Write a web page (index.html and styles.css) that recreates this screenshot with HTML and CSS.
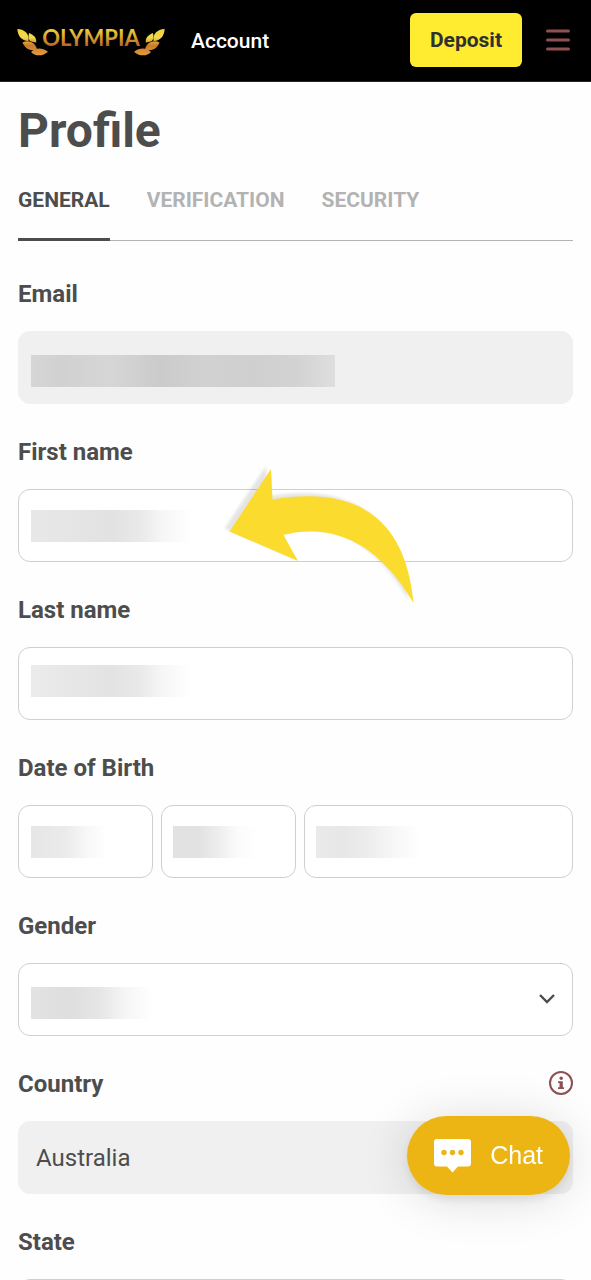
FILE: index.html
```html
<!DOCTYPE html>
<html lang="en">
<head>
<meta charset="utf-8">
<meta name="viewport" content="width=device-width, initial-scale=1">
<title>Olympia – Profile</title>
<link rel="stylesheet" href="styles.css">
</head>
<body>
<div class="app">
  <header class="topbar">
    <a class="logo" href="#" aria-label="Olympia home">
      <svg class="logo-mark" width="148" height="32" viewBox="0 0 148 32">
        <defs>
          <linearGradient id="gold" gradientUnits="userSpaceOnUse" x1="0" y1="4" x2="0" y2="31">
            <stop offset="0" stop-color="#f2d33c"/>
            <stop offset=".35" stop-color="#f3d94b"/>
            <stop offset=".65" stop-color="#cb7a2c"/>
            <stop offset="1" stop-color="#e59a3c"/>
          </linearGradient>
          <linearGradient id="gold-text" gradientUnits="userSpaceOnUse" x1="0" y1="6" x2="0" y2="22">
            <stop offset="0" stop-color="#ecc93a"/>
            <stop offset=".4" stop-color="#d9a832"/>
            <stop offset="1" stop-color="#b96424"/>
          </linearGradient>
          <g id="wing">
            <path d="M0.300 5C8 5.500 12.500 10 11.500 17C4 16.500 1 12 0.300 5Z"/>
            <path d="M12 9C17 11 19.800 14 19.200 18.500C17 18.500 15 18 12.800 16.800C11.300 14.500 11.300 11.500 12 9Z"/>
            <path d="M5.500 18.500C11 15.500 18.500 18 20 25.500C14 27.500 8 25 5.500 18.500Z"/>
            <path d="M14 28C19 23.500 25 23.500 31 27.700C26 32.500 18 32.500 14 28Z"/>
          </g>
        </defs>
        <use href="#wing" fill="url(#gold)"/>
        <use href="#wing" fill="url(#gold)" transform="translate(148 0) scale(-1 1)"/>
        <text class="logo-text" x="74" y="22" text-anchor="middle" fill="url(#gold-text)">OLYMPIA</text>
      </svg>
    </a>
    <span class="section-name">Account</span>
    <button class="deposit" type="button">Deposit</button>
    <button class="menu" type="button" aria-label="Menu">
      <svg width="24" height="22" viewBox="0 0 24 22" stroke="#8f5150" stroke-width="3" stroke-linecap="round"><path d="M1.500 2H22.500M1.500 11H22.500M1.500 20H22.500"/></svg>
    </button>
  </header>

  <main class="content">
    <h1 class="title">Profile</h1>
    <nav class="tabs" aria-label="Profile sections">
      <a class="tab tab-active" href="#" aria-current="page">GENERAL</a>
      <a class="tab" href="#">VERIFICATION</a>
      <a class="tab" href="#">SECURITY</a>
    </nav>

    <form class="form">
      <div class="field">
        <label class="label" for="email">Email</label>
        <input class="control control-filled masked masked-email" id="email" type="email" readonly>
      </div>
      <div class="field field-first">
        <label class="label" for="first">First name</label>
        <input class="control masked masked-first" id="first" type="text">
        <svg class="arrow" width="200" height="150" viewBox="0 0 200 150" aria-hidden="true">
          <defs><filter id="soft" x="-20%" y="-20%" width="140%" height="140%"><feGaussianBlur stdDeviation="1.500"/></filter>
          <path id="swoosh" d="M9.500 71.500L51 9L52.500 39.500C128 27 185 50 193.500 143C158 82 112 63 63.500 75L78 101Z"/></defs>
          <use href="#swoosh" fill="#000" opacity=".1" filter="url(#soft)" transform="translate(-5 -3)"/>
          <use href="#swoosh" fill="#fbdc2e"/>
        </svg>
      </div>
      <div class="field">
        <label class="label" for="last">Last name</label>
        <input class="control masked masked-last" id="last" type="text">
      </div>
      <div class="field" role="group" aria-labelledby="dob">
        <span class="label" id="dob">Date of Birth</span>
        <div class="dob">
          <input class="control masked masked-day" type="text" aria-label="Day">
          <input class="control masked masked-month" type="text" aria-label="Month">
          <input class="control masked masked-year" type="text" aria-label="Year">
        </div>
      </div>
      <div class="field">
        <label class="label" for="gender">Gender</label>
        <div class="select">
          <select class="control masked masked-gender" id="gender"><option value=""></option></select>
          <svg class="chevron" width="16" height="10" viewBox="0 0 16 10" fill="none" stroke="#4d4d4d" stroke-width="2.400" aria-hidden="true"><path d="M1 1L8 8L15 1"/></svg>
        </div>
      </div>
      <div class="field">
        <div class="label-row">
          <label class="label" for="country">Country</label>
          <button class="info" type="button" aria-label="Country information">
            <svg width="24" height="24" viewBox="0 0 24 24"><circle cx="12" cy="12" r="11" fill="none" stroke="#8c5152" stroke-width="2"/><circle cx="12.200" cy="7.200" r="1.700" fill="#8c5152"/><path d="M9 10.200H13.800V16.200H15V18H9V16.200H10.500V12H9Z" fill="#8c5152"/></svg>
          </button>
        </div>
        <input class="control control-filled" id="country" type="text" value="Australia" readonly>
      </div>
      <div class="field">
        <label class="label" for="state">State</label>
        <input class="control" id="state" type="text">
      </div>
    </form>
  </main>

  <button class="chat" type="button">
    <svg width="37" height="34" viewBox="0 0 37 34" aria-hidden="true"><path d="M3 0H34Q37 0 37 3V24Q37 27.500 34 27.500H24L18.500 33.500L13 27.500H3Q0 27.500 0 24V3Q0 0 3 0Z" fill="#fff"/><g fill="#edb513"><circle cx="10" cy="13.500" r="2.700"/><circle cx="18.500" cy="13.500" r="2.700"/><circle cx="27" cy="13.500" r="2.700"/></g></svg>
    <span>Chat</span>
  </button>
</div>
</body>
</html>
```
FILE: styles.css
```css
* {
  box-sizing: border-box;
}

body {
  margin: 0;
  background: #fefefe;
  color: #4d4d4d;
  font-family: Roboto, sans-serif;
}

button {
  padding: 0;
  border: 0;
  background: none;
  font-family: inherit;
  cursor: pointer;
}

svg {
  display: block;
}

.app {
  display: flex;
  flex-direction: column;
  height: 100vh;
}

.topbar {
  display: flex;
  flex-shrink: 0;
  align-items: center;
  padding: 13px 21px 14px 17px;
  border-bottom: 1px solid #262324;
  background: #000;
}

.logo-text {
  font: 700 22px Lato, sans-serif;
}

.section-name {
  margin-left: 26px;
  padding-top: 2px;
  color: #fff;
  font-size: 21px;
  font-weight: 500;
}

.deposit {
  margin-left: auto;
  padding: 0 20px;
  border-radius: 6px;
  background: #ffeb2f;
  color: #303030;
  font-size: 21px;
  font-weight: 700;
  line-height: 54px;
}

.menu {
  margin-left: 24px;
}

.content {
  flex: 1;
  min-height: 0;
  padding: 18px 18px 32px;
  overflow-y: auto;
  scrollbar-width: none;
}

.title {
  margin: 0;
  font-size: 48px;
  font-weight: 700;
  line-height: 62px;
}

.tabs {
  display: flex;
  gap: 37px;
  margin-top: 16px;
  box-shadow: inset 0 -1px #b3b3b3;
}

.tab {
  padding: 8px 0 24px;
  border-bottom: 3px solid transparent;
  color: #b3b3b3;
  font-size: 21px;
  font-weight: 700;
  line-height: 28px;
  text-decoration: none;
}

.tab-active {
  border-color: #4d4d4d;
  color: #4d4d4d;
}

.form {
  padding-top: 32px;
}

.field {
  position: relative;
  height: 158px;
}

.label {
  display: block;
  padding: 5px 0 21px;
  font-size: 24px;
  font-weight: 700;
  line-height: 32px;
}

.label-row {
  display: flex;
  justify-content: space-between;
  align-items: flex-start;
}

.info {
  margin-top: 8px;
}

.control {
  display: block;
  width: 100%;
  height: 73px;
  padding: 0 17px;
  border: 1px solid #cfcfcf;
  border-radius: 12px;
  outline: 0;
  background-color: #fff;
  color: #4d4d4d;
  font: 400 24px Roboto, sans-serif;
  appearance: none;
}

.control-filled {
  border-color: #f0f0f0;
  background-color: #f0f0f0;
}

.masked {
  background-repeat: no-repeat;
  background-position: 12px 20px;
  background-size: 160px 32px;
}

.masked-email {
  background-image: linear-gradient(90deg, #d6d6d6, #d1d1d1 10%, #d6d6d6 26%, #cbcbcb 42%, #d1d1d1 58%, #cfcfcf 72%, #d3d3d3 88%, #dedede);
  background-position: 12px 23px;
  background-size: 304px 32px;
}

.masked-first {
  background-image: linear-gradient(90deg, #e8e8e8, #e2e2e2 50%, #e9e9e9 68%, #f6f6f6 82%, #fff);
}

.masked-last {
  background-image: linear-gradient(90deg, #ebebeb, #e3e3e3 50%, #e9e9e9 68%, #f6f6f6 82%, #fff);
  background-position: 12px 17px;
}

.masked-day {
  background-image: linear-gradient(90deg, #e6e6e6, #ebebeb 45%, #f8f8f8 75%, #fff);
  background-size: 76px 32px;
}

.masked-month {
  background-image: linear-gradient(90deg, #e2e2e2, #e2e2e2 30%, #ededed 52%, #fbfbfb 75%, #fff);
  background-position: 11px 20px;
  background-size: 86px 32px;
}

.masked-year {
  background-image: linear-gradient(90deg, #eaeaea, #e7e7e7 25%, #ededed 50%, #f7f7f7 75%, #fff);
  background-position: 11px 20px;
  background-size: 104px 32px;
}

.masked-gender {
  background-image: linear-gradient(90deg, #e3e3e3, #dedede 32%, #e6e6e6 57%, #f6f6f6 78%, #fff);
  background-position: 12px 23px;
  background-size: 122px 32px;
}

.arrow {
  position: absolute;
  top: 29px;
  left: 202px;
  pointer-events: none;
}

.dob {
  display: grid;
  grid-template-columns: 1fr 1fr 2fr;
  gap: 8px;
}

.select {
  position: relative;
}

.chevron {
  position: absolute;
  top: 31px;
  right: 18px;
  pointer-events: none;
}

.chat {
  position: fixed;
  right: 21px;
  bottom: 85px;
  display: flex;
  align-items: center;
  gap: 19px;
  height: 79px;
  padding: 0 27px;
  border-radius: 40px;
  background: #edb513;
  box-shadow: 0 5px 10px rgba(0, 0, 0, .08), 0 4px 50px rgba(0, 0, 0, .14);
  color: #fff;
  font: 400 25px "Liberation Sans", Arial, sans-serif;
}
```
